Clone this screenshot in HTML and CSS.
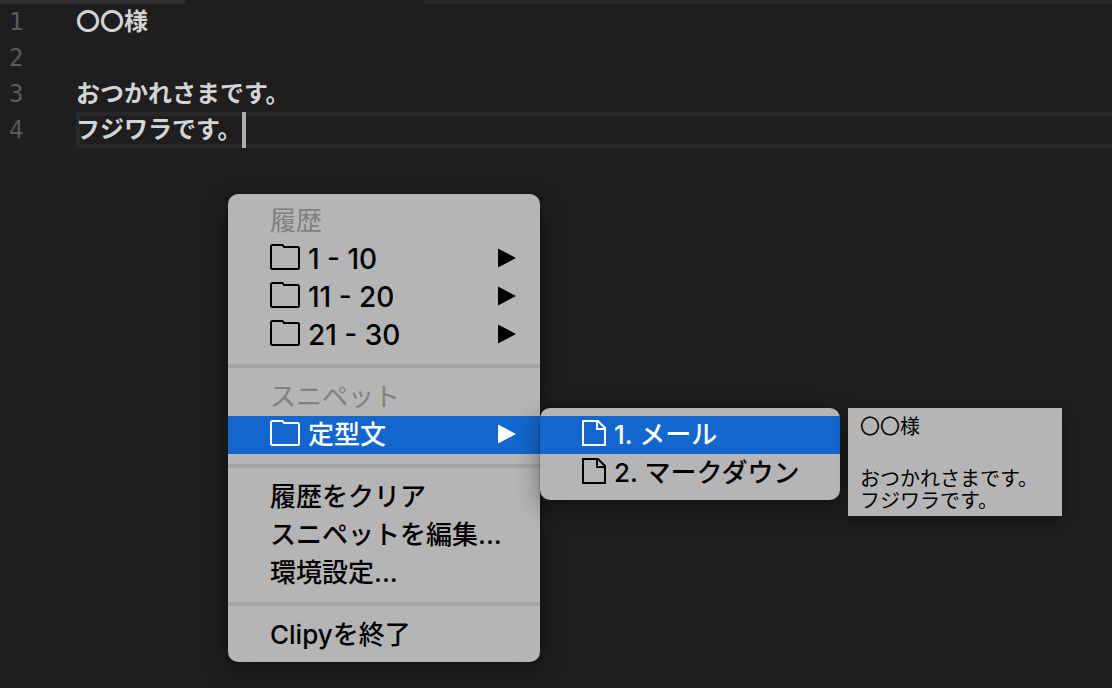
FILE: index.html
```html
<!DOCTYPE html>
<html lang="ja">
<head>
    <meta charset="UTF-8">
    <meta name="viewport" content="width=device-width, initial-scale=1.0">
    <title>Clipy</title>
    <link rel="stylesheet" href="styles.css">
</head>
<body>
    <svg class="symbols">
        <symbol id="folder" viewBox="0 0 30 26">
            <path d="M1 3V23.5Q1 25 2.500 25H27.500Q29 25 29 23.500V4.500Q29 3 27.500 3H14L12.500 1H2.500Q1 1 1 2.500Z" fill="none" stroke="currentColor" stroke-width="2"/>
        </symbol>
        <symbol id="file" viewBox="0 0 24 26">
            <path d="M1 1H16L23 8V25H1Z" fill="none" stroke="currentColor" stroke-width="2"/>
            <path d="M15 1V9H23" fill="none" stroke="currentColor" stroke-width="2"/>
        </symbol>
        <symbol id="arrow" viewBox="0 0 18 20">
            <path d="M0 0.500L18 10L0 19.500Z" fill="currentColor"/>
        </symbol>
    </svg>

    <div class="tabs">
        <div class="tab"></div>
        <div class="tab active"></div>
    </div>
    <div class="editor">
        <div class="line"><span class="number">1</span><span class="code">〇〇様</span></div>
        <div class="line"><span class="number">2</span><span class="code"></span></div>
        <div class="line"><span class="number">3</span><span class="code">おつかれさまです。</span></div>
        <div class="line current"><span class="number">4</span><span class="code">フジワラです。<span class="cursor"></span></span></div>
    </div>

    <div class="popup">
        <div class="menu main-menu">
            <div class="heading">履歴</div>
            <button class="item latin"><svg class="folder"><use href="#folder"/></svg>1 - 10<svg class="arrow"><use href="#arrow"/></svg></button>
            <button class="item latin"><svg class="folder"><use href="#folder"/></svg>11 - 20<svg class="arrow"><use href="#arrow"/></svg></button>
            <button class="item latin"><svg class="folder"><use href="#folder"/></svg>21 - 30<svg class="arrow"><use href="#arrow"/></svg></button>
            <hr>
            <div class="heading">スニペット</div>
            <button class="item selected"><svg class="folder"><use href="#folder"/></svg>定型文<svg class="arrow"><use href="#arrow"/></svg></button>
            <hr>
            <button class="item">履歴をクリア</button>
            <button class="item">スニペットを編集...</button>
            <button class="item">環境設定...</button>
            <hr>
            <button class="item">Clipyを終了</button>
        </div>
        <div class="menu sub-menu">
            <button class="item selected"><svg class="file"><use href="#file"/></svg>1. メール</button>
            <button class="item"><svg class="file"><use href="#file"/></svg>2. マークダウン</button>
        </div>
        <div class="preview">
            <p>〇〇様</p>
            <p>おつかれさまです。<br>フジワラです。</p>
        </div>
    </div>
</body>
</html>
```
FILE: styles.css
```css
body {
    margin: 0;
    min-height: 100vh;
    background: #1e1e1e;
    font-family: Inter, "Noto Sans CJK JP", sans-serif;
}

.symbols {
    display: none;
}

/* editor */
.tabs {
    display: flex;
    height: 4px;
    background: #252526;
}

.tab {
    width: 185px;
    background: #2d2d2d;
}

.tab.active {
    width: 239px;
    background: #1e1e1e;
}

.line {
    display: flex;
    height: 36px;
    font-size: 24px;
    line-height: 36px;
}

.number {
    width: 76px;
    padding-left: 9px;
    box-sizing: border-box;
    color: #5a5a5a;
    font-family: "DejaVu Sans Mono", monospace;
}

.code {
    display: flex;
    flex: 1;
    color: #d4d4d4;
    font-family: "Noto Sans CJK JP", sans-serif;
    font-weight: 600;
    line-height: 32px;
}

.current .code {
    box-shadow: inset 0 4px #282828, inset 0 -4px #282828, inset 4px 0 #282828;
}

.cursor {
    width: 4px;
    height: 36px;
    background: #aeafad;
}

/* popup menus */
.popup {
    position: absolute;
    top: 194px;
    left: 228px;
    display: flex;
    align-items: flex-start;
}

.menu {
    box-sizing: border-box;
    padding: 8px 0;
    border-radius: 10px;
    background: #b5b5b5;
    box-shadow: 0 8px 24px rgba(0, 0, 0, 0.4), 0 0 2px rgba(0, 0, 0, 0.5);
}

.main-menu {
    width: 312px;
}

.sub-menu {
    width: 300px;
    margin-top: 214px;
}

.heading,
.item {
    display: flex;
    align-items: center;
    box-sizing: border-box;
    width: 100%;
    height: 38px;
    padding: 0 24px 0 42px;
    font-size: 26px;
    line-height: 38px;
    white-space: pre;
}

.heading {
    color: #808080;
}

.item {
    border: none;
    background: none;
    color: #000;
    font-family: inherit;
    font-weight: 500;
    text-align: left;
}

.item.latin {
    font-size: 28px;
}

.item.selected {
    background: #1266cc;
    color: #fff;
}

.folder {
    width: 30px;
    height: 26px;
    margin: 0 8px 4px 0;
}

.file {
    width: 24px;
    height: 26px;
    margin: 0 8px 4px 0;
}

.arrow {
    width: 18px;
    height: 20px;
    margin: 0 0 2px auto;
}

hr {
    height: 4px;
    margin: 10px 0;
    border: none;
    background: #a5a5a5;
}

.preview {
    box-sizing: border-box;
    width: 214px;
    margin: 214px 0 0 8px;
    padding: 8px 12px 4px;
    background: #b5b5b5;
    box-shadow: 0 4px 12px rgba(0, 0, 0, 0.3);
    color: #000;
    font-size: 20px;
    line-height: 22px;
}

.preview p {
    margin: 0 0 30px;
}

.preview p:last-child {
    margin: 0;
}
```
